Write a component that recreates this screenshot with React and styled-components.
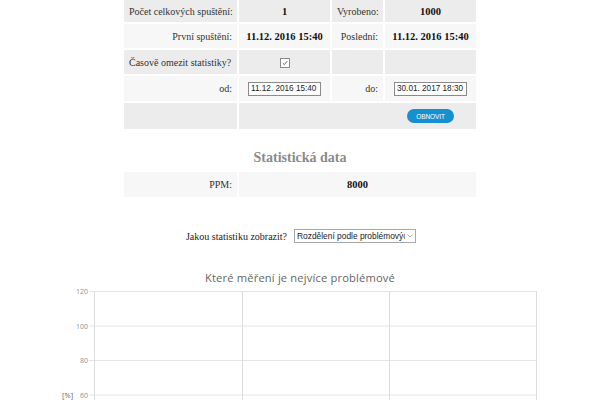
import React from "react";
import styled, { createGlobalStyle } from "styled-components";

const GlobalStyle = createGlobalStyle`
  html, body {
    margin: 0;
    padding: 0;
    background: #ffffff;
    font-family: "Liberation Serif", "Times New Roman", serif;
    color: #222;
    overflow: hidden;
  }
`;

const Page = styled.div`
  width: 600px;
  display: flex;
  flex-direction: column;
  align-items: center;
  & > * {
    flex-shrink: 0;
  }
`;

const Table = styled.table`
  width: 352px;
  border-collapse: separate;
  border-spacing: 2px 0;
  margin: 0 -2px;
  font-family: "Liberation Serif", "Times New Roman", serif;
  font-size: 10px;
  table-layout: fixed;
`;

const Row = styled.tr`
  background: ${(p) => (p.$light ? "#f7f7f7" : "#ececec")};
  height: ${(p) => p.$h || 26}px;
`;

const Label = styled.td`
  text-align: ${(p) => p.$align || "right"};
  padding: 0 5px;
  color: #333;
  white-space: nowrap;
  border-top: ${(p) => (p.$first ? "0" : "2px solid #fff")};
`;

const Value = styled.td`
  text-align: ${(p) => p.$align || "center"};
  font-weight: ${(p) => (p.$bold ? 700 : 400)};
  font-size: 10.5px;
  padding: 0 ${(p) => p.$pad || 4}px;
  color: #111;
  white-space: nowrap;
  border-top: ${(p) => (p.$first ? "0" : "2px solid #fff")};
`;

const DateInput = styled.input`
  width: 73px;
  height: 14px;
  box-sizing: border-box;
  border: 1px solid #8a8a8a;
  font-family: "Liberation Sans", Arial, sans-serif;
  font-size: 8.2px;
  padding: 0 2px;
  color: #222;
  background: #fff;
  margin: 0;
`;

const Check = styled.span`
  display: inline-flex;
  width: 8px;
  height: 8px;
  border: 1px solid #888;
  background: #fff;
  align-items: center;
  justify-content: center;
  vertical-align: middle;
`;

const Button = styled.button`
  background: #1790cf;
  color: #fff;
  border: 0;
  border-radius: 8px;
  height: 14px;
  width: 47px;
  padding: 0;
  font-family: "Liberation Sans", Arial, sans-serif;
  font-size: 6.5px;
  letter-spacing: -0.1px;
  margin-right: 18px;
  vertical-align: middle;
`;

const Heading = styled.h2`
  margin: 20px 0 5px;
  font-size: 14px;
  font-weight: 700;
  color: #8a8a8a;
  line-height: 18px;
`;

const Question = styled.div`
  margin-top: 32px;
  display: flex;
  align-items: center;
  gap: 7px;
  font-size: 10px;
  color: #222;
  margin-left: 2px;
`;

const SelectBox = styled.span`
  position: relative;
  display: inline-block;
`;

const Select = styled.select`
  appearance: none;
  width: 122px;
  height: 14px;
  border: 1px solid #a8a8a8;
  background: #fff;
  font-family: "Liberation Sans", Arial, sans-serif;
  font-size: 8.4px;
  padding: 0 10px 0 2px;
  color: #222;
`;

const Chevron = styled.svg`
  position: absolute;
  right: 3px;
  top: 5px;
  pointer-events: none;
`;

const ChartTitle = styled.div`
  margin-top: 28px;
  font-family: "Open Sans", "DejaVu Sans", sans-serif;
  font-size: 11.2px;
  line-height: 14px;
  color: #666;
  letter-spacing: 0.15px;
`;

const ChartSvg = styled.svg`
  display: block;
  margin-top: 1px;
`;

const grid = [
  { v: 120, y: 5.5 },
  { v: 100, y: 40 },
  { v: 80, y: 74.5 },
  { v: 60, y: 109 },
];
const cols = [94.5, 242.5, 389.5, 536.5];

function Chart() {
  return (
    <ChartSvg width="600" height="120" viewBox="0 0 600 120">
      {grid.map((g) => (
        <g key={g.v}>
          <line x1="89" x2="537" y1={g.y} y2={g.y} stroke="#e4e4e4" strokeWidth="1" />
          <text
            x="88"
            y={g.y + 2.5}
            textAnchor="end"
            fontSize="7"
            fontFamily="Open Sans, DejaVu Sans, sans-serif"
            fill="#8f8f8f"
          >
            {g.v}
          </text>
        </g>
      ))}
      {cols.map((x) => (
        <line key={x} x1={x} x2={x} y1="5.5" y2="120" stroke="#dcdcdc" strokeWidth="1" />
      ))}
      <text x="62" y="112" fontSize="7.5" fontFamily="Open Sans, DejaVu Sans, sans-serif" fill="#666">
        [%]
      </text>
    </ChartSvg>
  );
}

export default function App() {
  return (
    <>
      <GlobalStyle />
      <Page>
        <Table>
          <colgroup>
            <col style={{ width: 113 }} />
            <col style={{ width: 91 }} />
            <col style={{ width: 51 }} />
            <col style={{ width: 91 }} />
          </colgroup>
          <tbody>
            <Row $h={22}>
              <Label $first $align="left">Počet celkových spuštění:</Label>
              <Value $first $bold>1</Value>
              <Label $first $align="left">Vyrobeno:</Label>
              <Value $first $bold>1000</Value>
            </Row>
            <Row $light>
              <Label>První spuštění:</Label>
              <Value $bold>11.12. 2016 15:40</Value>
              <Label>Poslední:</Label>
              <Value $bold>11.12. 2016 15:40</Value>
            </Row>
            <Row>
              <Label $align="left">Časově omezit statistiky?</Label>
              <Value>
                <Check>
                  <svg width="6" height="6" viewBox="0 0 6 6">
                    <path d="M0.8 3.2 L2.3 4.6 L5.2 1.2" fill="none" stroke="#555" strokeWidth="0.9" />
                  </svg>
                </Check>
              </Value>
              <Value />
              <Value />
            </Row>
            <Row $light $h={27}>
              <Label>od:</Label>
              <Value>
                <DateInput readOnly value="11.12. 2016 15:40" />
              </Value>
              <Label>do:</Label>
              <Value>
                <DateInput readOnly value="30.01. 2017 18:30" />
              </Value>
            </Row>
            <Row $h={28}>
              <Value />
              <Value colSpan={3} $align="right" $pad={0}>
                <Button>OBNOVIT</Button>
              </Value>
            </Row>
          </tbody>
        </Table>

        <Heading>Statistická data</Heading>

        <Table>
          <colgroup>
            <col style={{ width: 113 }} />
            <col style={{ width: 237 }} />
          </colgroup>
          <tbody>
            <Row $light $h={25}>
              <Label $first>PPM:</Label>
              <Value $first $bold>8000</Value>
            </Row>
          </tbody>
        </Table>

        <Question>
          <span>Jakou statistiku zobrazit?</span>
          <SelectBox>
            <Select defaultValue="a">
              <option value="a">Rozdělení podle problémových</option>
            </Select>
            <Chevron width="6" height="4" viewBox="0 0 6 4">
              <path d="M0.5 0.5 L3 3 L5.5 0.5" fill="none" stroke="#999" strokeWidth="0.8" />
            </Chevron>
          </SelectBox>
        </Question>

        <ChartTitle>Které měření je nejvíce problémové</ChartTitle>
        <Chart />
      </Page>
    </>
  );
}
